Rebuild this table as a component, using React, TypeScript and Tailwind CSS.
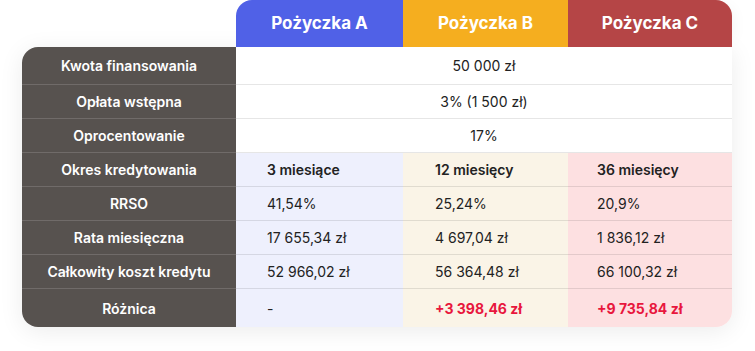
import React from "react";

type Row = {
  label: string;
  values: string[];
  span?: boolean;
  bold?: boolean;
  red?: boolean;
};

const rows: Row[] = [
  { label: "Kwota finansowania", values: ["50 000 zł"], span: true },
  { label: "Opłata wstępna", values: ["3% (1 500 zł)"], span: true },
  { label: "Oprocentowanie", values: ["17%"], span: true },
  { label: "Okres kredytowania", values: ["3 miesiące", "12 miesięcy", "36 miesięcy"], bold: true },
  { label: "RRSO", values: ["41,54%", "25,24%", "20,9%"] },
  { label: "Rata miesięczna", values: ["17 655,34 zł", "4 697,04 zł", "1 836,12 zł"] },
  { label: "Całkowity koszt kredytu", values: ["52 966,02 zł", "56 364,48 zł", "66 100,32 zł"] },
  { label: "Różnica", values: ["-", "+3 398,46 zł", "+9 735,84 zł"], red: true },
];

const colBg = ["bg-[#eef0fd]", "bg-[#faf4e7]", "bg-[#fde0e1]"];
const colPad = ["pl-[31px]", "pl-[32px]", "pl-[29px]"];

export default function App() {
  return (
    <div className="min-h-[351px] w-[755px] bg-white pl-[22px] font-['Inter',sans-serif]">
      <div className="grid grid-cols-[214px_167px_165px_164px]">
        <div />
        <div className="flex h-[47px] items-center justify-center rounded-tl-2xl bg-[#5061e7] text-[17px] font-bold text-white">
          Pożyczka A
        </div>
        <div className="flex h-[47px] items-center justify-center bg-[#f5ae1f] text-[17px] font-bold text-white">
          Pożyczka B
        </div>
        <div className="flex h-[47px] items-center justify-center rounded-tr-2xl bg-[#b54546] text-[17px] font-bold text-white shadow-[8px_0_16px_-8px_rgba(0,0,0,0.06)]">
          Pożyczka C
        </div>
      </div>
      <div className="grid w-[710px] grid-cols-[214px_167px_165px_164px] overflow-hidden rounded-tl-2xl rounded-b-2xl shadow-[0_4px_24px_rgba(0,0,0,0.08)]">
        {rows.map((r, i) => {
          const first = i === 0;
          const last = i === rows.length - 1;
          const h = first ? "h-[38px]" : last ? "h-[38px]" : "h-[34px]";
          const border = last ? "" : "border-b";
          return (
            <React.Fragment key={r.label}>
              <div
                className={`flex ${h} ${border} items-center justify-center border-white/15 bg-[#57524f] text-[14px] font-semibold text-white`}
              >
                {r.label}
              </div>
              {r.span ? (
                <div
                  className={`col-span-3 flex ${h} ${border} items-center justify-center border-[#e6e6e6] bg-white text-[14px] text-[#222]`}
                >
                  {r.values[0]}
                </div>
              ) : (
                r.values.map((v, j) => (
                  <div
                    key={j}
                    className={`flex ${h} ${border} items-center border-black/10 ${colBg[j]} ${colPad[j]} text-[14px] ${
                      r.bold ? "font-semibold text-[#222]" : "text-[#222]"
                    } ${r.red && j > 0 ? "font-bold text-[#e8173d]" : ""}`}
                  >
                    {v}
                  </div>
                ))
              )}
            </React.Fragment>
          );
        })}
      </div>
    </div>
  );
}
